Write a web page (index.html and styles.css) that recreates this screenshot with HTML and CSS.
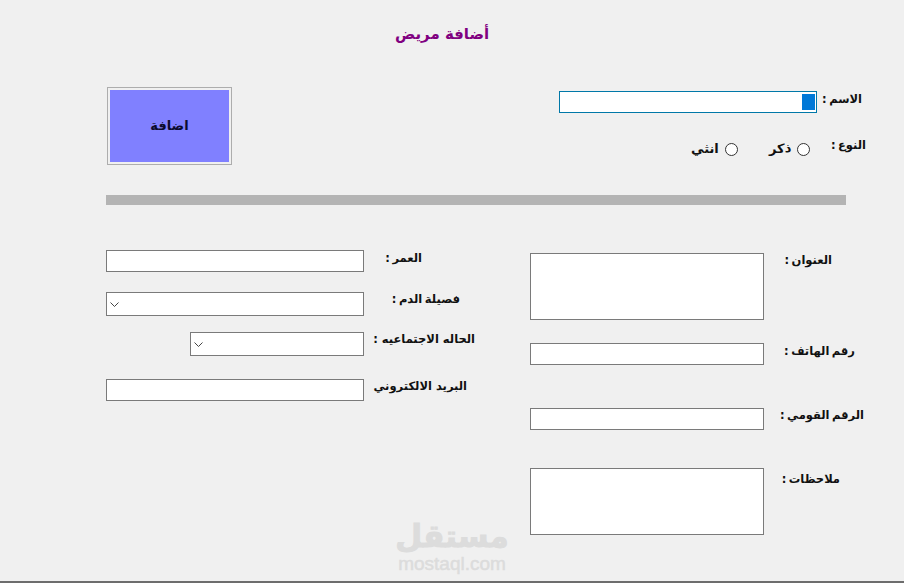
FILE: index.html
```html
<!DOCTYPE html>
<html lang="ar">
<head>
<meta charset="utf-8">
<title>أضافة مريض</title>
<link rel="stylesheet" href="styles.css">
</head>
<body>
<main class="form">
  <h1 class="title">أضافة مريض</h1>

  <section class="top">
    <button class="add" type="button">اضافة</button>
    <div class="identity">
      <div class="row name-row">
        <div class="field name-field"><span class="caret"></span></div>
        <label class="label end-862">الاسم :</label>
      </div>
      <div class="row gender-row">
        <div class="choices">
          <span class="choice choice-f"><span class="choice-text">انثي</span><span class="radio"></span></span>
          <span class="choice choice-m"><span class="choice-text">ذكر</span><span class="radio"></span></span>
        </div>
        <label class="label gender-label">النوع :</label>
      </div>
    </div>
  </section>

  <hr class="divider">

  <section class="columns">
    <div class="col col-left">
      <div class="row r-age">
        <div class="field wide"></div>
        <label class="label l-age">العمر :</label>
      </div>
      <div class="row r-blood">
        <div class="select wide"><svg class="chev" viewBox="0 0 9 5"><path d="M.5.5 4.5 4.5 8.5.5"/></svg></div>
        <label class="label l-blood">فصيلة الدم :</label>
      </div>
      <div class="row r-status">
        <div class="select narrow"><svg class="chev" viewBox="0 0 9 5"><path d="M.5.5 4.5 4.5 8.5.5"/></svg></div>
        <label class="label l-status">الحاله الاجتماعيه :</label>
      </div>
      <div class="row r-mail">
        <div class="field wide"></div>
        <label class="label l-mail">البريد الالكتروني</label>
      </div>
    </div>

    <div class="col col-right">
      <div class="row">
        <div class="field box"></div>
        <label class="label l-addr">العنوان :</label>
      </div>
      <div class="row r-phone">
        <div class="field line"></div>
        <label class="label l-phone">رقم الهاتف :</label>
      </div>
      <div class="row r-nid">
        <div class="field line"></div>
        <label class="label l-nid">الرقم القومي :</label>
      </div>
      <div class="row r-notes">
        <div class="field box"></div>
        <label class="label l-notes">ملاحظات :</label>
      </div>
    </div>
  </section>

  <div class="watermark">
    <span class="wm-ar">مستقل</span>
    <span class="wm-en">mostaql.com</span>
  </div>
</main>
</body>
</html>
```
FILE: styles.css
```css
* { box-sizing: border-box; }
html, body { margin: 0; height: 100%; overflow: hidden; }
body { background: #f0f0f0; font-family: "DejaVu Sans", "Noto Sans", sans-serif; color: #000; }

.form {
  position: relative;
  width: 904px;
  height: 583px;
  padding: 25px 58px 0 106px;
  background: #f0f0f0;
  border-bottom: 2px solid #6d6d6d;
}

.title {
  margin: 0 0 0 289px;
  width: 94px;
  height: 18px;
  font-size: 15px;
  line-height: 18px;
  font-weight: 700;
  color: #800080;
  text-align: center;
  white-space: nowrap;
}

.top { display: flex; justify-content: space-between; margin-top: 44px; height: 78px; padding-left: 1px; }

.add {
  width: 125px;
  height: 78px;
  padding: 0 0 2px;
  background: #8080ff;
  border: 1px solid #adadad;
  outline: 2px solid #f0f0f0;
  outline-offset: -3px;
  font: 700 13px "DejaVu Sans", sans-serif;
  color: #0b0b2e;
}

.identity { width: 307px; padding-top: 4px; margin-right: -20px; }

.row { display: flex; align-items: flex-start; }
.label { font-size: 11.5px; line-height: 16px; font-weight: 700; word-spacing: -1.5px; white-space: nowrap; color: #111; direction: rtl; text-align: right; }

.field { background: #fff; border: 1px solid #7a7a7a; }
.name-field { display: flex; justify-content: flex-end; align-items: center; width: 258px; height: 22px; border-color: #0078a8; }
.caret { width: 13px; height: 16px; margin-right: 1px; background: #0078d7; }
.end-862 { width: 45px; }

.gender-row { margin-top: 23px; height: 26px; }
.choices { display: flex; align-items: center; height: 18px; margin: 4px 0 0 132px; }
.choice { display: flex; align-items: center; gap: 6px; }
.choice-f { width: 78px; }
.radio { width: 13px; height: 13px; border: 1px solid #333; border-radius: 50%; background: #fff; }
.choice-text { font-size: 13px; line-height: 18px; font-weight: 700; color: #111; }
.gender-label { width: 40px; margin: 1px 0 0 17px; }

.divider { height: 10px; margin: 30px 0 0; border: 0; background: #b4b4b4; }

.columns { display: grid; grid-template-columns: 258px 316px; column-gap: 166px; margin-top: 45px; width: 740px; }

.col-left .row { width: 370px; }
.wide { width: 258px; height: 22px; }
.narrow { width: 174px; height: 24px; margin-left: 84px; }
.select { display: flex; align-items: center; padding-left: 3px; background: #fff; border: 1px solid #7a7a7a; }
.wide.select { height: 24px; }
.chev { width: 9px; height: 5px; fill: none; stroke: #444; stroke-width: 1; }

.r-blood { margin-top: 20px; }
.r-status { margin-top: 16px; }
.r-mail { margin-top: 23px; }

.l-age { width: 58px; }
.l-blood { width: 96px; margin-top: -1px; }
.l-status { width: 111px; margin-top: -1px; word-spacing: 0; }
.l-mail { width: 103px; margin-top: -1px; word-spacing: 0; }

.col-right { width: 340px; padding-top: 3px; }
.col-right .row { width: 340px; }
.box { width: 234px; height: 67px; }
.line { width: 234px; height: 22px; }
.r-phone { margin-top: 23px; }
.r-nid { margin-top: 43px; }
.r-notes { margin-top: 38px; }
.l-addr { width: 68px; margin-top: -1px; }
.l-phone { width: 91px; }
.l-nid { width: 100px; margin-top: -1px; }
.l-notes { width: 76px; margin-top: 3px; }

.watermark {
  position: absolute;
  left: 396px;
  top: 516px;
  width: 112px;
  display: flex;
  flex-direction: column;
  align-items: center;
  color: #dcdcdc;
  pointer-events: none;
}
.wm-ar { font-size: 31px; line-height: 40px; font-weight: 700; white-space: nowrap; -webkit-text-stroke: 1px #dcdcdc; }
.wm-en { font: 400 19px/15px "Liberation Sans", sans-serif; white-space: nowrap; -webkit-text-stroke: .5px #dcdcdc; }
```
